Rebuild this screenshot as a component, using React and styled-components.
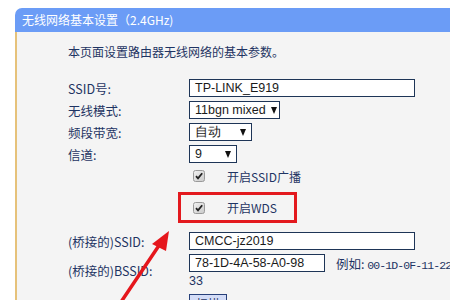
import styled, { createGlobalStyle } from "styled-components";

const Global = createGlobalStyle`
    html, body {
        margin: 0;
        padding: 0;
        background: #ffffff;
        overflow: hidden;
    }
    body {
        width: 450px;
        height: 300px;
        font-family: "Noto Sans CJK SC", sans-serif;
    }
`

const Page = styled.div`
    position: relative;
    width: 450px;
    height: 300px;
    padding: 8px 0 0 15px;
    box-sizing: border-box;
    overflow: hidden;
`

const Panel = styled.div`
    width: 460px;
    display: flex;
    flex-direction: column;
`

const Header = styled.div`
    height: 24px;
    background: #6b9cf6;
    border-radius: 7px 0 0 0;
    color: #ffffff;
    font-size: 12px;
    line-height: 24px;
    padding-left: 7px;
    white-space: nowrap;
`

const Body = styled.div`
    background: #f4f4f4;
    border-left: 2px solid #e6c27a;
    padding: 12px 0 20px 51px;
    height: 300px;
    color: #1f3463;
    font-size: 12px;
`

const Intro = styled.div`
    line-height: 16px;
    margin-bottom: 17px;
    white-space: nowrap;
`

const Row = styled.div`
    display: grid;
    grid-template-columns: 121px 1fr;
    align-items: center;
    min-height: 22px;
    margin-top: ${p => p.$gap || 0}px;
`

const Label = styled.div`
    font-size: 12.5px;
    white-space: nowrap;
`

const Cell = styled.div`
    display: flex;
    flex-direction: column;
`

const Line = styled.div`
    display: flex;
    align-items: center;
    height: 22px;
    white-space: nowrap;
`

const Field = styled.div`
    box-sizing: border-box;
    width: ${p => p.$w}px;
    height: 18px;
    background: #ffffff;
    border: 1px solid #1e3557;
    font-family: "Liberation Sans", Arial, sans-serif;
    font-size: 12.5px;
    color: #1a1a1a;
    line-height: 16px;
    padding: 0 5px;
    display: flex;
    align-items: center;
    justify-content: space-between;
    white-space: nowrap;
`

const Caret = styled.span`
    width: 0;
    height: 0;
    border-left: 3.5px solid transparent;
    border-right: 3.5px solid transparent;
    border-top: 7px solid #111111;
    margin-left: 5px;
`

const Example = styled.span`
    margin-left: 11px;
    font-size: 12.5px;
    font-family: "Noto Sans CJK SC", sans-serif;
    .code {
        font-family: "Liberation Mono", monospace;
        font-size: 11.5px;
        letter-spacing: -0.9px;
    }
`

const Wrap = styled.div`
    font-family: "Liberation Sans", Arial, sans-serif;
    font-size: 12.5px;
    line-height: 14px;
    margin-top: 0;
`

const CheckLine = styled.div`
    display: flex;
    align-items: center;
    height: ${p => p.$h}px;
    padding-left: 4px;
    gap: 22px;
    font-size: 12px;
    white-space: nowrap;
`

const Highlight = styled.div`
    box-sizing: border-box;
    width: 119px;
    height: 31px;
    margin-left: -11px;
    margin-top: 5px;
    border: 3px solid #e3191e;
    padding: 0 0 0 8px;
    display: flex;
    align-items: center;
`

const Button = styled.div`
    width: 38px;
    height: 20px;
    margin-top: 6px;
    box-sizing: border-box;
    border: 1px solid #27407a;
    background: #d3dcf7;
    font-size: 12px;
    text-align: center;
    line-height: 18px;
`

const Overlay = styled.svg`
    position: absolute;
    left: 0;
    top: 0;
    pointer-events: none;
`

const CheckBox = () => (
    <svg width="12" height="12" viewBox="0 0 12 12">
        <defs>
            <linearGradient id="cb" x1="0" y1="0" x2="1" y2="1">
                <stop offset="0" stopColor="#f2f2f2" />
                <stop offset="1" stopColor="#c9c9c9" />
            </linearGradient>
        </defs>
        <rect x="0.5" y="0.5" width="11" height="11" rx="2" fill="url(#cb)" stroke="#9a9a9a" />
        <path d="M3 6.2 L5 8.4 L9.2 3.2" fill="none" stroke="#222" strokeWidth="1.8" />
    </svg>
)

const App = () => {
    return (
        <Page>
            <Global />
            <Panel>
                <Header>无线网络基本设置（2.4GHz)</Header>
                <Body>
                    <Intro>本页面设置路由器无线网络的基本参数。</Intro>

                    <Row>
                        <Label>SSID号:</Label>
                        <Field $w={226}>TP-LINK_E919</Field>
                    </Row>
                    <Row>
                        <Label>无线模式:</Label>
                        <Field $w={91}>11bgn mixed<Caret /></Field>
                    </Row>
                    <Row>
                        <Label>频段带宽:</Label>
                        <Field $w={63}>自动<Caret /></Field>
                    </Row>
                    <Row>
                        <Label>信道:</Label>
                        <Field $w={48}>9<Caret /></Field>
                    </Row>

                    <Row>
                        <Label />
                        <CheckLine $h={22}>
                            <CheckBox />
                            <span>开启SSID广播</span>
                        </CheckLine>
                    </Row>
                    <Row>
                        <Label />
                        <Highlight>
                            <CheckLine $h={25}>
                                <CheckBox />
                                <span>开启WDS</span>
                            </CheckLine>
                        </Highlight>
                    </Row>

                    <Row $gap={7}>
                        <Label>(桥接的)SSID:</Label>
                        <Field $w={226}>CMCC-jz2019</Field>
                    </Row>
                    <Row>
                        <Label>(桥接的)BSSID:</Label>
                        <Cell>
                            <Line>
                                <Field $w={136}>78-1D-4A-58-A0-98</Field>
                                <Example>例如: <span className="code">00-1D-0F-11-22-</span></Example>
                            </Line>
                            <Wrap>33</Wrap>
                        </Cell>
                    </Row>
                    <Row>
                        <Label />
                        <Button>扫描</Button>
                    </Row>
                </Body>
            </Panel>
            <Overlay width="450" height="300" viewBox="0 0 450 300">
                <line x1="121" y1="302" x2="162" y2="241" stroke="#e5161c" strokeWidth="3.5" strokeLinecap="round" />
                <polygon points="169,231 152,244 166,251" fill="#e5161c" />
            </Overlay>
        </Page>
    )
}

export default App;
